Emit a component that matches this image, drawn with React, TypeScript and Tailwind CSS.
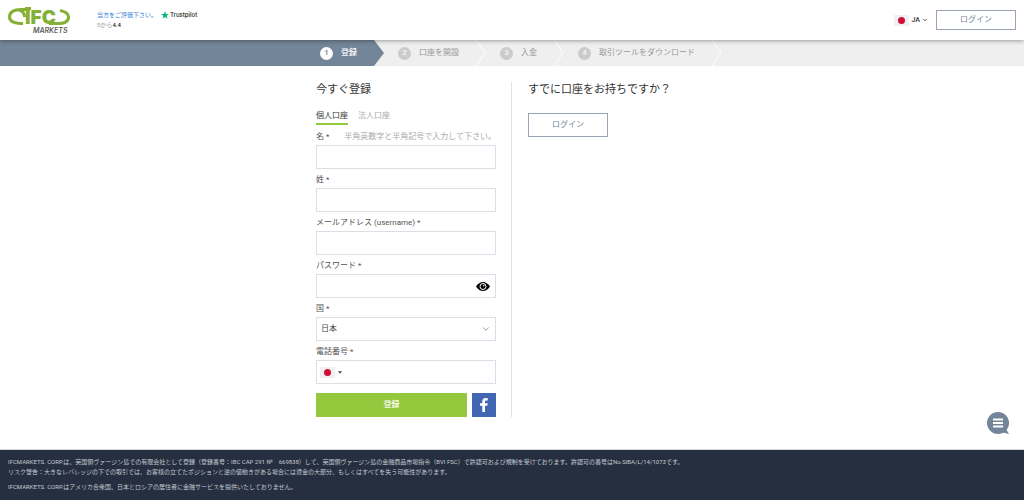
import { ReactNode, useState } from "react";
import clsx from "clsx";
import { ChevronDown } from "lucide-react";

const steps = ["登録", "口座を開設", "入金", "取引ツールをダウンロード"];

function Logo() {
  return (
    <a href="#" aria-label="IFC Markets" className="block h-[30px] w-16">
      <svg viewBox="0 0 64 30" className="h-[30px] w-16">
        <g fill="none" stroke="#84b135" strokeWidth="3">
          <path d="M22 4.500H14C6 4.500 1.500 7 1.500 12S6 18.500 15 18.500" />
          <path d="M11 5C14.500 6 16.500 8 16.500 12" />
          <path d="M41 18.500H50C58 18.500 60.500 16 60.500 12S57 6.500 52 5.500" />
        </g>
        <path d="M17 2h6v3h-6z" fill="#84b135" />
        <text
          x="17"
          y="19"
          fill="#84b135"
          className="font-['Inter',sans-serif] text-[19px] font-black"
        >
          IFC
        </text>
        <text
          x="25"
          y="28"
          fill="#5d5e60"
          className="font-['Inter',sans-serif] text-[7px] font-semibold italic"
        >
          MARKETS
        </text>
      </svg>
    </a>
  );
}

function Flag() {
  return (
    <span className="flex h-[11px] w-[15px] items-center justify-center bg-[#f0f0f0]">
      <span className="size-[7px] rounded-full bg-[#d0103a]" />
    </span>
  );
}

function Header() {
  return (
    <header className="relative z-10 flex h-10 items-center bg-white px-2 shadow-[0_1px_4px_rgba(0,0,0,0.35)]">
      <Logo />
      <div className="ml-[25px] text-[6px] leading-[10px]">
        <div className="flex items-center gap-1">
          <a href="#" className="text-[#3c82dc]">
            当方をご評価下さい。
          </a>
          <span className="flex items-center gap-px">
            <svg viewBox="0 0 24 24" className="size-2" fill="#00b67a">
              <path d="M12 0l3 9h9l-7.300 5.400L19.500 23 12 17.700 4.500 23l2.800-8.600L0 9h9z" />
            </svg>
            <span className="font-['Inter',sans-serif] font-medium text-[#191919]">
              Trustpilot
            </span>
          </span>
        </div>
        <p className="text-[#999]">
          5から<b className="font-medium text-[#222]">4.4</b>
        </p>
      </div>
      <div className="ml-auto flex items-center gap-2">
        <button className="flex items-center">
          <Flag />
          <span className="ml-[3px] text-[7px] font-medium text-[#333]">JA</span>
          <ChevronDown className="ml-0.5 size-1.5 text-[#555]" strokeWidth={4} />
        </button>
        <LoginButton className="h-5" />
      </div>
    </header>
  );
}

function LoginButton({ className }: { className: string }) {
  return (
    <button
      className={clsx(
        "w-20 border border-[#9aa5b8] bg-white text-[#738598]",
        className,
      )}
    >
      ログイン
    </button>
  );
}

function Steps() {
  return (
    <nav className="flex h-[26px] bg-[#efefef]">
      <div className="flex-1 bg-[#738598]" />
      <ol className="flex w-[392px]">
        {steps.map((step, i) => (
          <li
            key={step}
            className={clsx(
              "flex shrink-0 items-center",
              i === 0 ? "font-medium text-white" : "text-[#999]",
            )}
          >
            <span
              className={clsx(
                "flex h-full items-center gap-2 pr-[17px]",
                i === 0 ? "bg-[#738598] pl-1" : "pl-3.5",
              )}
            >
              <span
                className={clsx(
                  "flex size-[13px] items-center justify-center rounded-full",
                  i === 0 ? "bg-white text-[#738598]" : "bg-[#cbcbcb] text-white",
                )}
              >
                {i + 1}
              </span>
              {step}
            </span>
            <svg viewBox="0 0 10 26" className="h-full w-2.5">
              {i === 0 ? (
                <path d="M0 0L10 13 0 26z" fill="#738598" />
              ) : (
                <path d="M0 0L9 13 0 26" fill="none" stroke="#fff" />
              )}
            </svg>
          </li>
        ))}
      </ol>
      <div className="flex-1" />
    </nav>
  );
}

type FieldProps = {
  id: string;
  label: string;
  hint?: string;
  children: ReactNode;
};

function Field({ id, label, hint, children }: FieldProps) {
  return (
    <div className="mb-[3px]">
      <div className="flex h-4 justify-between leading-4">
        <label htmlFor={id} className="text-[#555]">
          {label} *
        </label>
        {hint && <span className="text-[#aaa]">{hint}</span>}
      </div>
      <div className="flex h-6 items-center border border-[#dcdde7] focus-within:border-[#738598]">
        {children}
      </div>
    </div>
  );
}

const inputStyle = "h-full min-w-0 flex-1 bg-transparent px-1 outline-none";

function RegisterForm() {
  const [tab, setTab] = useState(0);
  const [showPassword, setShowPassword] = useState(false);

  return (
    <form
      className="w-[196px] border-r border-[#e2e2e6] pr-[15px]"
      onSubmit={(e) => e.preventDefault()}
    >
      <h1 className="text-[11px] leading-4 text-[#333]">今すぐ登録</h1>
      <div className="mt-2.5 mb-1 flex gap-2.5">
        {["個人口座", "法人口座"].map((name, i) => (
          <button
            key={name}
            type="button"
            onClick={() => setTab(i)}
            className={clsx(
              "h-[17px] border-b-2 leading-3",
              tab === i
                ? "border-[#95c93d] text-[#333]"
                : "border-transparent text-[#aaa]",
            )}
          >
            {name}
          </button>
        ))}
      </div>
      <Field
        id="first"
        label="名"
        hint="半角英数字と半角記号で入力して下さい。"
      >
        <input id="first" type="text" className={inputStyle} />
      </Field>
      <Field id="last" label="姓">
        <input id="last" type="text" className={inputStyle} />
      </Field>
      <Field id="email" label="メールアドレス (username)">
        <input id="email" type="email" className={inputStyle} />
      </Field>
      <Field id="password" label="パスワード">
        <input
          id="password"
          type={showPassword ? "text" : "password"}
          className={inputStyle}
        />
        <button
          type="button"
          aria-label="パスワードを表示"
          className="mr-[5px]"
          onClick={() => setShowPassword(!showPassword)}
        >
          <svg viewBox="0 0 28 18" className="h-[9px] w-3.5">
            <path d="M0 9C4 3 9 0 14 0s10 3 14 9c-4 6-9 9-14 9S4 15 0 9z" />
            <circle cx="14" cy="9" r="6" fill="none" stroke="#fff" strokeWidth="2" />
            <circle cx="15.500" cy="7.500" r="1.500" fill="#fff" />
          </svg>
        </button>
      </Field>
      <Field id="country" label="国">
        <select
          id="country"
          className="h-full min-w-0 flex-1 appearance-none bg-transparent px-1 text-[#444] outline-none"
        >
          <option>日本</option>
        </select>
        <ChevronDown className="mr-1 size-2.5 text-[#888]" />
      </Field>
      <Field id="phone" label="電話番号">
        <button
          type="button"
          aria-label="国番号"
          className="ml-[3px] flex items-center gap-[3px]"
        >
          <Flag />
          <svg viewBox="0 0 6 4" className="h-[3px] w-1">
            <path d="M0 0h6L3 4z" fill="#444" />
          </svg>
        </button>
        <input id="phone" type="tel" className={inputStyle} />
      </Field>
      <div className="mt-[9px] flex gap-[5px]">
        <button className="h-6 flex-1 bg-[#95c93d] font-medium text-white">
          登録
        </button>
        <button
          type="button"
          aria-label="Facebook"
          className="flex size-6 items-center justify-center bg-[#4267b2]"
        >
          <svg viewBox="0 0 8 14" className="h-3.5 w-2" fill="#fff">
            <path d="M2.300 14V7.700H0V5.200h2.300V3.400C2.300 1.200 3.600 0 5.600 0c1 0 1.900.1 2.100.1v2.400H6.300c-1.100 0-1.300.5-1.300 1.300v1.400h2.700l-.4 2.500H5V14z" />
          </svg>
        </button>
      </div>
    </form>
  );
}

function Footer() {
  return (
    <footer className="flex-1 border-t border-[#d5d8dd] bg-[#252f40] px-2 py-[7px] text-[6px] leading-[10px] text-[#c6cad1]">
      <p>
        IFCMARKETS. CORP.は、英国領ヴァージン島での有限会社として登録（登録番号：IBC
        CAP 291 №　669838）して、英国領ヴァージン島の金融商品市場指令（BVI
        FSC）で許認可および規制を受けております。許認可の番号はNo.SIBA/L/14/1073です。
      </p>
      <p>
        リスク警告：大きなレバレッジの下での取引では、お客様の立てたポジションと逆の値動きがある場合には資金の大部分、もしくはすべてを失う可能性があります。
      </p>
      <p className="mt-[5px]">
        IFCMARKETS. CORP.はアメリカ合衆国、日本とロシアの居住者に金融サービスを提供いたしておりません。
      </p>
    </footer>
  );
}

export default function App() {
  return (
    <div
      lang="ja"
      className="flex min-h-screen flex-col bg-white font-['Roboto','Noto_Sans_CJK_JP',sans-serif] text-[8px] leading-3"
    >
      <Header />
      <Steps />
      <main className="mx-auto flex w-[392px] pt-4 pb-8">
        <RegisterForm />
        <section className="ml-4 shrink-0">
          <h2 className="text-[11px] leading-4 text-[#333]">
            すでに口座をお持ちですか？
          </h2>
          <LoginButton className="mt-[15px] h-6" />
        </section>
      </main>
      <Footer />
      <button
        aria-label="チャット"
        className="fixed right-[15px] bottom-[66px] z-20"
      >
        <svg viewBox="0 0 22 22" className="size-[22px]">
          <circle cx="11" cy="11" r="11" fill="#738598" />
          <path d="M14 20l8 2-3-5z" fill="#738598" />
          <path d="M6 7.500h10M6 11h10M6 14.500h10" stroke="#fff" strokeWidth="2" />
        </svg>
      </button>
    </div>
  );
}
